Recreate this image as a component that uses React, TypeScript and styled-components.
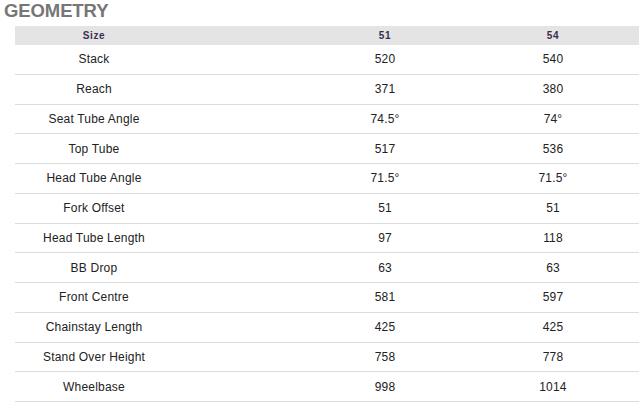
import React from "react";
import styled, { createGlobalStyle } from "styled-components";

const Global = createGlobalStyle`
  html, body { margin: 0; padding: 0; background: #fff; }
  body { font-family: "Liberation Sans", Arial, sans-serif; }
`;

const Page = styled.div`
  width: 640px;
  height: 410px;
  overflow: hidden;
`;

const Title = styled.h2`
  margin: 0;
  padding: 1px 0 0 4px;
  height: 24px;
  box-sizing: border-box;
  font-size: 18.5px;
  line-height: 20px;
  font-weight: bold;
  color: #767676;
  letter-spacing: -0.1px;
`;

const Table = styled.div`
  margin-left: 15px;
  width: 624px;
  display: flex;
  flex-direction: column;
`;

const Row = styled.div<{ $head?: boolean }>`
  display: grid;
  grid-template-columns: 158px 128px 168px 168px;
  align-items: center;
  box-sizing: border-box;
  height: ${(p) => (p.$head ? "19px" : "29.75px")};
  background: ${(p) => (p.$head ? "#e4e4e4" : "#fff")};
  border-bottom: ${(p) => (p.$head ? "none" : "1px solid #dcdcdc")};
  margin-top: ${(p) => (p.$head ? "2px" : "0")};
`;

const Cell = styled.div<{ $head?: boolean; $col: number }>`
  grid-column: ${(p) => p.$col};
  text-align: center;
  font-size: ${(p) => (p.$head ? "10px" : "12px")};
  font-weight: ${(p) => (p.$head ? "bold" : "normal")};
  color: ${(p) => (p.$head ? "#3a2e52" : "#222")};
  letter-spacing: ${(p) => (p.$head ? "0.6px" : "0.2px")};
  white-space: nowrap;
`;

const rows: [string, string, string][] = [
  ["Stack", "520", "540"],
  ["Reach", "371", "380"],
  ["Seat Tube Angle", "74.5°", "74°"],
  ["Top Tube", "517", "536"],
  ["Head Tube Angle", "71.5°", "71.5°"],
  ["Fork Offset", "51", "51"],
  ["Head Tube Length", "97", "118"],
  ["BB Drop", "63", "63"],
  ["Front Centre", "581", "597"],
  ["Chainstay Length", "425", "425"],
  ["Stand Over Height", "758", "778"],
  ["Wheelbase", "998", "1014"],
];

export default function App() {
  return (
    <Page>
      <Global />
      <Title>GEOMETRY</Title>
      <Table>
        <Row $head>
          <Cell $head $col={1}>Size</Cell>
          <Cell $head $col={3}>51</Cell>
          <Cell $head $col={4}>54</Cell>
        </Row>
        {rows.map(([label, a, b]) => (
          <Row key={label}>
            <Cell $col={1}>{label}</Cell>
            <Cell $col={3}>{a}</Cell>
            <Cell $col={4}>{b}</Cell>
          </Row>
        ))}
      </Table>
    </Page>
  );
}
